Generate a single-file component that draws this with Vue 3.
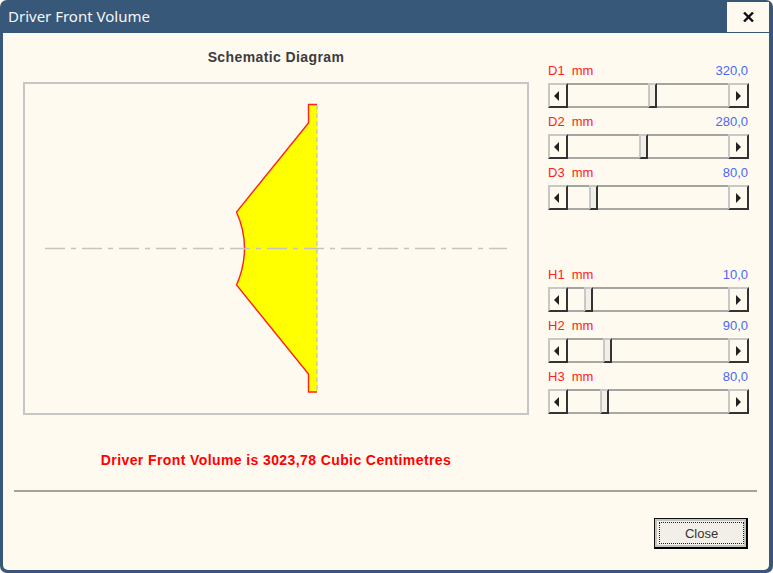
<script setup>
const dGroup = [
  { name: 'D1', value: '320,0', thumb: 80 },
  { name: 'D2', value: '280,0', thumb: 71 },
  { name: 'D3', value: '80,0', thumb: 21 }
]
const hGroup = [
  { name: 'H1', value: '10,0', thumb: 16 },
  { name: 'H2', value: '90,0', thumb: 35 },
  { name: 'H3', value: '80,0', thumb: 32 }
]
const groups = [dGroup, hGroup]
</script>

<template>
  <div class="window">
    <header class="titlebar">
      <span class="title">Driver Front Volume</span>
      <button class="x" type="button" aria-label="Close window">
        <svg width="11" height="10" viewBox="0 0 11 10"><path d="M1 0.5 L10 9.5 M10 0.5 L1 9.5" stroke="#111" stroke-width="2.4" fill="none"/></svg>
      </button>
    </header>
    <main class="client">
      <div class="top">
        <section class="left">
          <h2 class="heading">Schematic Diagram</h2>
          <div class="diagram">
            <svg width="502" height="329" viewBox="25 84 502 329">
              <path d="M317 104.5 H308.5 V123 L236.5 212 Q244.5 230 244.5 248 Q244.5 267 236.5 285 L308.5 374 V392 H317 Z" fill="#ffff00"/>
              <path d="M317 104.5 H308.5 V123 L236.5 212 Q244.5 230 244.5 248 Q244.5 267 236.5 285 L308.5 374 V392 H317" fill="none" stroke="#ff2020" stroke-width="1.4"/>
              <path d="M45 248.5 H507" stroke="#c4c4c0" stroke-width="1.4" stroke-dasharray="20 6 5 6" fill="none"/>
              <path d="M317 105 V392" stroke="#c8c8b0" stroke-width="1.4" stroke-dasharray="5 3" fill="none"/>
            </svg>
          </div>
          <p class="result">Driver Front Volume is 3023,78 Cubic Centimetres</p>
        </section>
        <section class="right">
          <div v-for="(group, g) in groups" :key="g" class="group">
            <div v-for="row in group" :key="row.name" class="row">
              <div class="labels">
                <span class="name">{{ row.name }}<span class="unit">mm</span></span>
                <span class="value">{{ row.value }}</span>
              </div>
              <div class="scroll">
                <span class="btn"><i class="arrow-left"></i></span>
                <span class="track"><span class="thumb" :style="{ left: row.thumb + 'px' }"></span></span>
                <span class="btn"><i class="arrow-right"></i></span>
              </div>
            </div>
          </div>
        </section>
      </div>
      <hr class="rule" />
      <div class="footer">
        <button class="close" type="button"><span class="focus">Close</span></button>
      </div>
    </main>
  </div>
</template>

<style>
html, body { margin: 0; background: #fffaf0; }
</style>

<style scoped>
.window {
  width: 773px;
  height: 573px;
  box-sizing: border-box;
  background: #375878;
  border-radius: 7px;
  padding: 1px 4px 3px 3px;
  display: flex;
  flex-direction: column;
  font-family: "Liberation Sans", Arial, sans-serif;
  overflow: hidden;
}
.titlebar {
  height: 32px;
  flex: none;
  display: flex;
  align-items: center;
  justify-content: space-between;
}
.title {
  font-family: "Noto Sans", "Open Sans", sans-serif;
  font-size: 15px;
  color: #f4f6f8;
  padding-left: 5px;
  padding-bottom: 2px;
}
.x {
  width: 42px;
  height: 30px;
  margin: 0 0 1px;
  border: 0;
  padding: 0;
  background: #fffaf0;
  display: flex;
  align-items: center;
  justify-content: center;
}
.client {
  flex: 1;
  background: #fffaf0;
  display: flex;
  flex-direction: column;
  border-radius: 0 0 5px 5px;
}
.top { display: flex; height: 457px; flex: none; }
.left { width: 525px; margin-left: 20px; flex: none; }
.heading {
  margin: 16px 0 0;
  height: 33px;
  width: 506px;
  box-sizing: border-box;
  font-size: 14px;
  line-height: 16px;
  font-weight: bold;
  color: #3c3c3c;
  text-align: center;
  letter-spacing: 0.4px;
}
.diagram {
  width: 506px;
  height: 333px;
  box-sizing: border-box;
  border: 2px solid #c6c6c4;
}
.diagram svg { display: block; }
.result {
  margin: 37px 0 0;
  width: 506px;
  font-size: 14px;
  line-height: 16px;
  font-weight: bold;
  color: #ff0000;
  text-align: center;
  letter-spacing: 0.4px;
}
.right { width: 201px; padding-top: 29px; }
.group + .group { margin-top: 51px; }
.row { height: 51px; box-sizing: border-box; }
.labels {
  height: 21px;
  display: flex;
  justify-content: space-between;
  font-size: 13px;
  line-height: 16px;
  padding-right: 1px;
  position: relative;
  top: 1px;
}
.name { color: #ff2020; }
.unit { margin-left: 7px; }
.value { color: #4a68f0; }
.scroll {
  height: 25px;
  display: flex;
  box-sizing: border-box;
  border-top: 2px solid #a4a4a0;
  border-bottom: 2px solid #a8a8a4;
}
.btn {
  width: 20px;
  flex: none;
  box-sizing: border-box;
  display: flex;
  align-items: center;
  justify-content: center;
  border: 2px solid #c8c8c6;
  border-bottom: 2px solid #333;
  border-right: 2px solid #333;
  margin: -2px 0;
  background: #fffaf0;
}
.btn:first-child { padding-right: 3px; }
.btn:last-child { width: 21px; }
.track { flex: 1; position: relative; background: #fffaf0; }
.thumb {
  position: absolute;
  top: -2px;
  bottom: -2px;
  width: 9px;
  box-sizing: border-box;
  background: #f2efe8;
  border: 2px solid #c8c8c6;
  border-right: 2px solid #333;
  border-bottom: 2px solid #333;
}
.arrow-left, .arrow-right { width: 0; height: 0; border-style: solid; }
.arrow-left { border-width: 5px 5px 5px 0; border-color: transparent #222 transparent transparent; }
.arrow-right { border-width: 5px 0 5px 5px; border-color: transparent transparent transparent #222; }
.rule {
  margin: 0 12px 0 11px;
  border: 0;
  height: 2px;
  background: #a3a199;
  flex: none;
}
.footer { flex: 1; display: flex; justify-content: flex-end; padding: 26px 21px 0 0; }
.close {
  width: 94px;
  height: 31px;
  box-sizing: border-box;
  padding: 3px 2px 3px 4px;
  border: 1px solid #111;
  border-right: 2px solid #000;
  border-bottom: 2px solid #000;
  background: #f2efe8;
  box-shadow: inset 0 0 0 2px #c4c4c0;
  font-family: "Liberation Sans", Arial, sans-serif;
  font-size: 13px;
  color: #333;
}
.focus {
  display: flex;
  height: 100%;
  align-items: center;
  justify-content: center;
  border: 1px dotted #222;
  box-sizing: border-box;
}
</style>
